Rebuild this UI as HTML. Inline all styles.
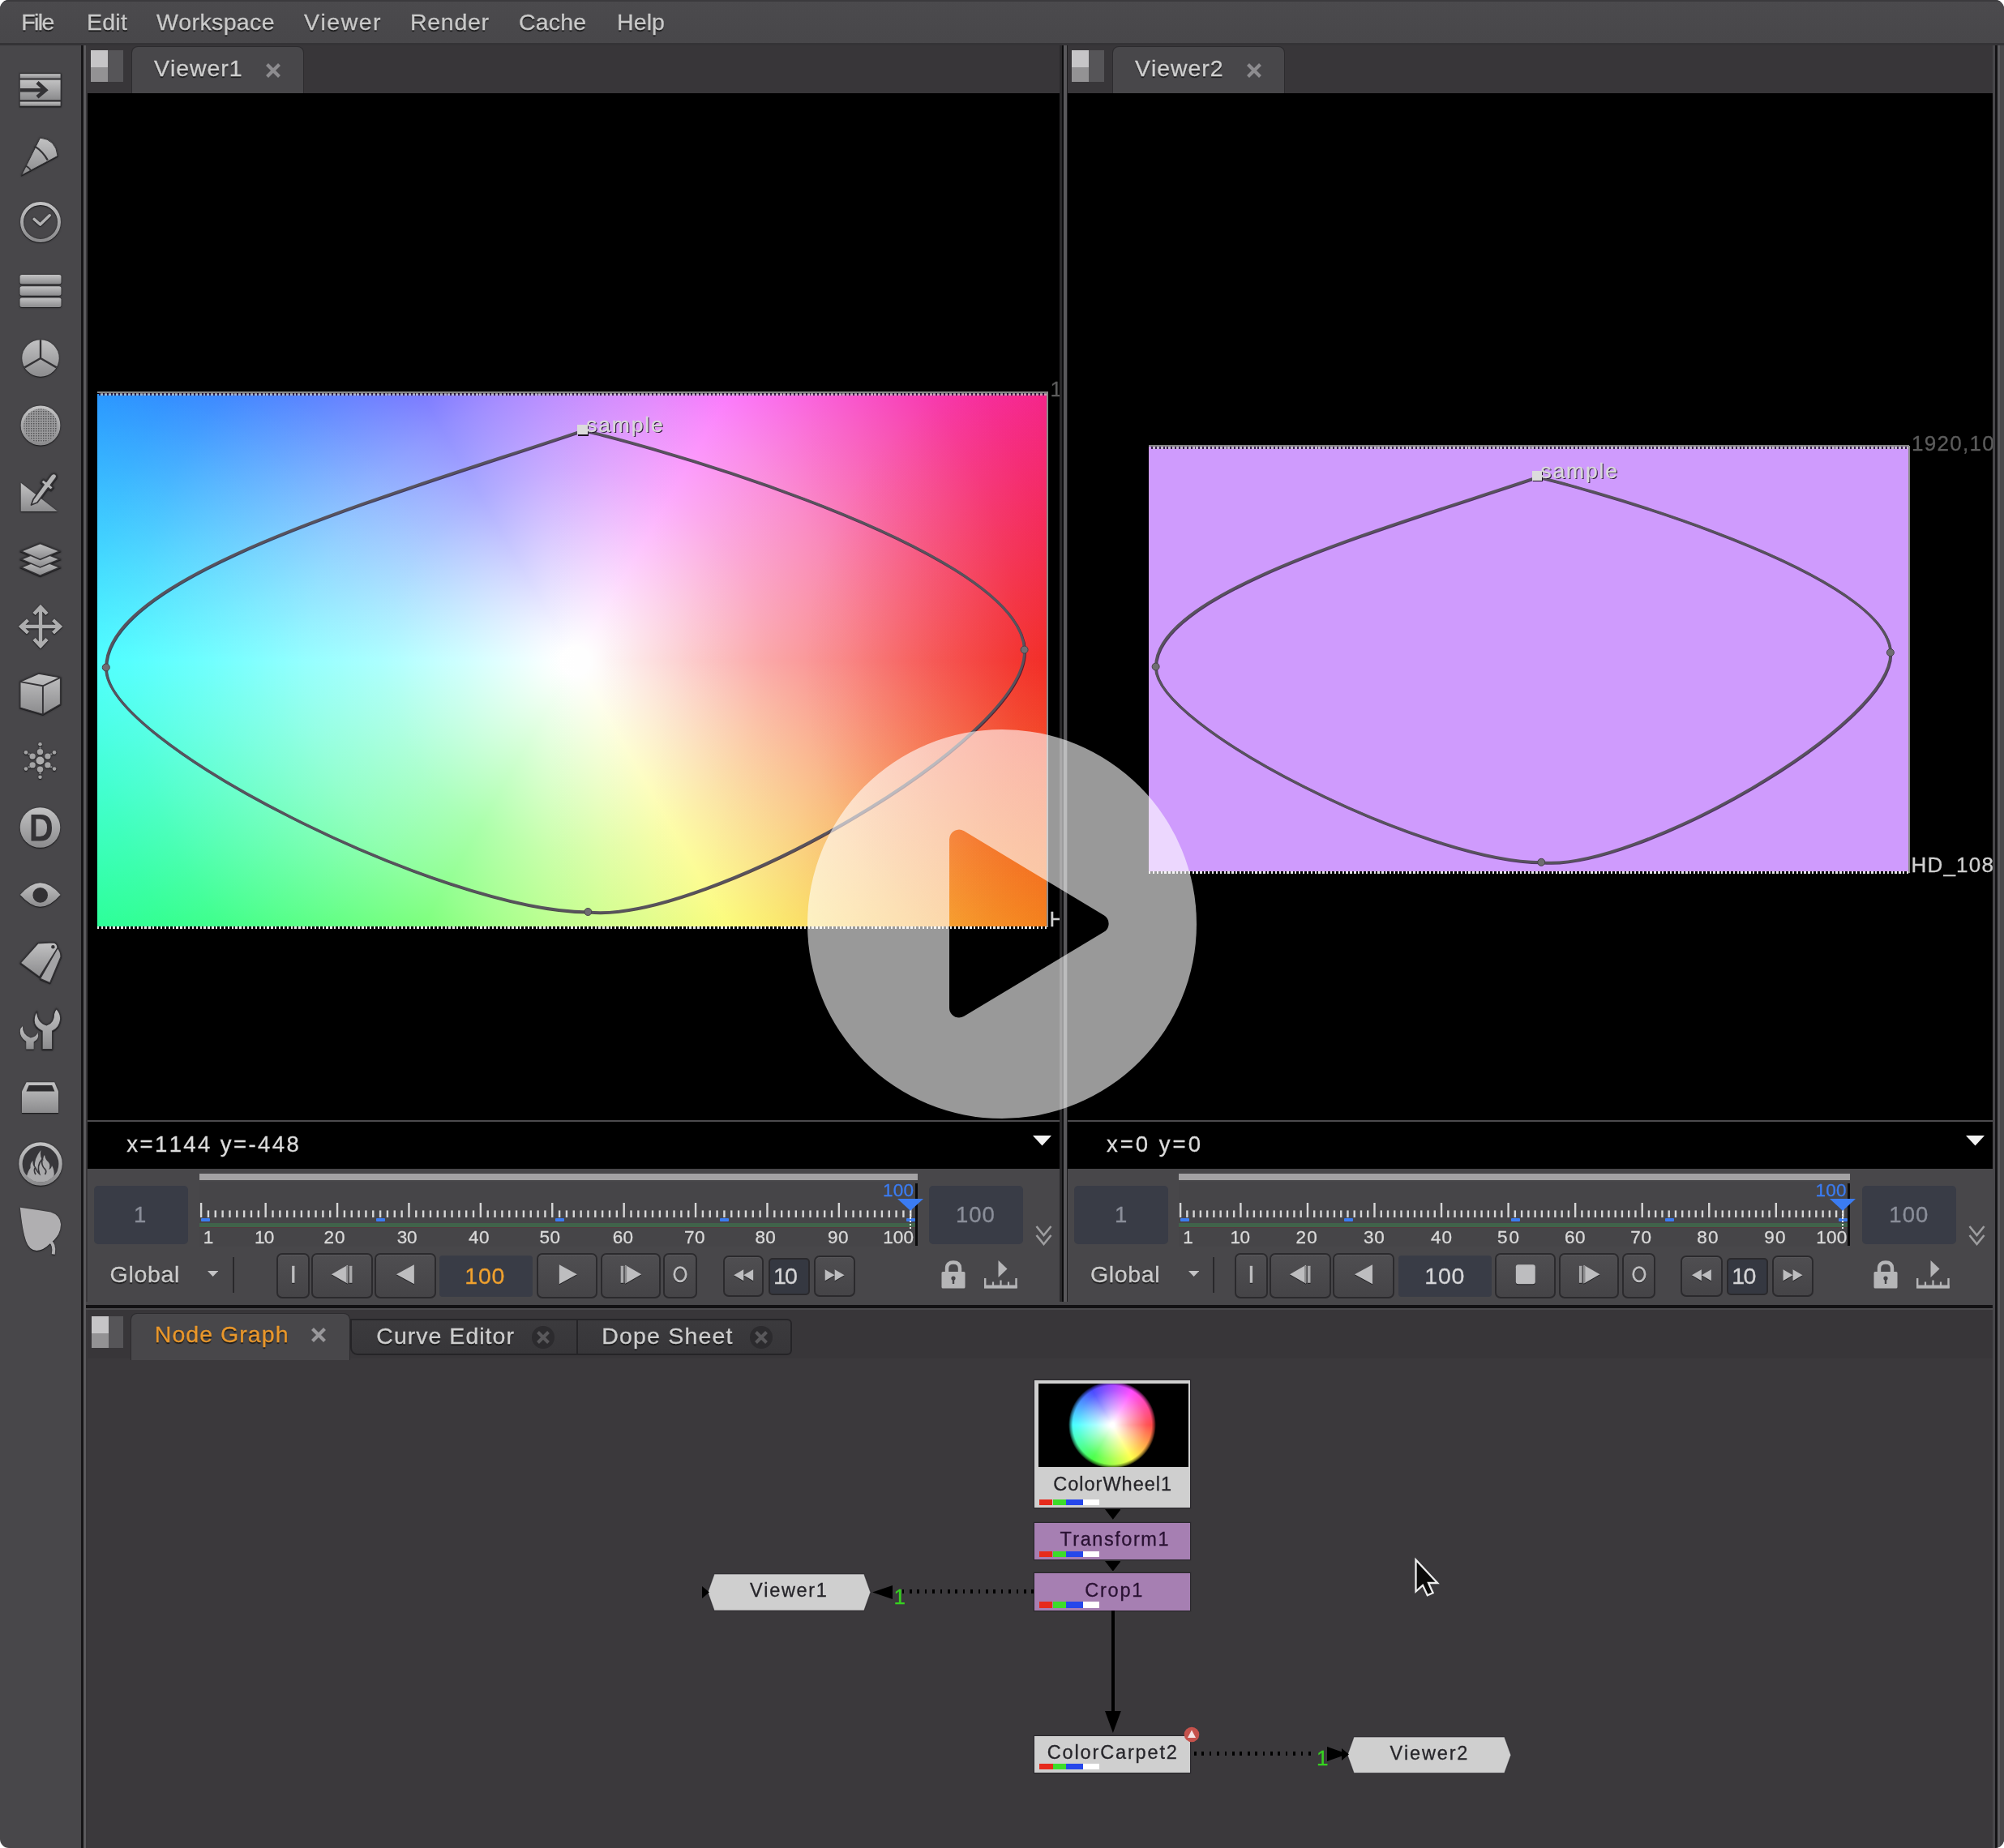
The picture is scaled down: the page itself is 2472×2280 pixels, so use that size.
<!DOCTYPE html>
<html><head><meta charset="utf-8"><title>Nuke</title>
<style>
html,body{margin:0;padding:0;background:#fff;}
body{width:2472px;height:2280px;overflow:hidden;font-family:"Liberation Sans",sans-serif;}
#app{will-change:transform;position:absolute;left:0;top:0;width:2472px;height:2280px;background:#48474a;border-radius:11px;overflow:hidden;}
#app div,#app span,#app svg{position:absolute;}
.t{white-space:nowrap;line-height:1;font-kerning:none;-webkit-text-stroke:.3px currentColor;}
.btn{box-sizing:border-box;border:2px solid #2b2a2d;border-radius:7px;background:linear-gradient(#4f4e51,#454447);box-shadow:inset 0 1px 0 rgba(255,255,255,.06);}
.fld{border-radius:5px;background:#393c46;}
</style></head><body><div id="app">
<svg width="0" height="0" style="left:0;top:0"><defs>
<linearGradient id="ig" x1="0" y1="0" x2="0" y2="1"><stop offset="0" stop-color="#c2c2c3"/><stop offset="1" stop-color="#8b8b8d"/></linearGradient>
<pattern id="dots" width="3" height="3" patternUnits="userSpaceOnUse"><rect width="3" height="3" fill="#9a9a9c"/><rect width="1.5" height="1.5" fill="#555557"/></pattern>
</defs></svg>

<div style="left:0px;top:0px;width:2472px;height:53px;background:linear-gradient(#4b4a4d,#48474a);"></div>
<div style="left:0px;top:0px;width:2472px;height:1.6px;background:#3b3a3d;"></div>
<div style="left:0px;top:53px;width:2472px;height:3px;background:#343336;"></div>
<span class="t " style="left:26.20px;top:12.87px;font-size:28.5px;color:#c9c9c9;letter-spacing:-1.62px;text-shadow:0 1.5px 1px rgba(20,20,20,.85);">File</span>
<span class="t " style="left:106.90px;top:12.87px;font-size:28.5px;color:#c9c9c9;letter-spacing:0.29px;text-shadow:0 1.5px 1px rgba(20,20,20,.85);">Edit</span>
<span class="t " style="left:193.00px;top:12.87px;font-size:28.5px;color:#c9c9c9;letter-spacing:0.38px;text-shadow:0 1.5px 1px rgba(20,20,20,.85);">Workspace</span>
<span class="t " style="left:375.00px;top:12.87px;font-size:28.5px;color:#c9c9c9;letter-spacing:1.48px;text-shadow:0 1.5px 1px rgba(20,20,20,.85);">Viewer</span>
<span class="t " style="left:506.00px;top:12.87px;font-size:28.5px;color:#c9c9c9;letter-spacing:0.70px;text-shadow:0 1.5px 1px rgba(20,20,20,.85);">Render</span>
<span class="t " style="left:640.00px;top:12.87px;font-size:28.5px;color:#c9c9c9;letter-spacing:0.16px;text-shadow:0 1.5px 1px rgba(20,20,20,.85);">Cache</span>
<span class="t " style="left:761.00px;top:12.87px;font-size:28.5px;color:#c9c9c9;letter-spacing:0.12px;text-shadow:0 1.5px 1px rgba(20,20,20,.85);">Help</span>
<div style="left:106px;top:56px;width:2366px;height:59px;background:#383639;"></div>
<div style="left:100px;top:56px;width:3px;height:2224px;background:#161517;"></div>
<div style="left:103px;top:56px;width:3px;height:2224px;background:#5b5a5d;"></div>
<div style="left:106px;top:56px;width:2px;height:2224px;background:#39373a;"></div>
<div style="left:1307px;top:56px;width:3px;height:1554px;background:#2b2a2c;"></div>
<div style="left:1309.5px;top:56px;width:2px;height:1554px;background:#0c0c0d;"></div>
<div style="left:1311.5px;top:56px;width:4.3px;height:1554px;background:#59585b;"></div>
<div style="left:1315.8px;top:56px;width:1.4px;height:1554px;background:#1d1c1e;"></div>
<div style="left:2458px;top:56px;width:3px;height:2224px;background:#48474a;"></div>
<div style="left:2461px;top:56px;width:2.8px;height:2224px;background:#141315;"></div>
<div style="left:2463.8px;top:56px;width:3.4px;height:2224px;background:#5b5a5d;"></div>
<div style="left:2467.2px;top:56px;width:4.8px;height:2224px;background:#49484b;"></div>
<div style="left:106px;top:1606px;width:2352px;height:4px;background:#48474a;"></div>
<div style="left:106px;top:1610px;width:2352px;height:3.5px;background:#121113;"></div>
<div style="left:106px;top:1613.5px;width:2352px;height:2px;background:#4a494c;"></div>
<div style="left:108px;top:1615.5px;width:2350px;height:61px;background:#383639;"></div>
<div style="left:108px;top:1676px;width:2350px;height:604px;background:#3b393c;"></div>
<svg style="left:17.5px;top:78.6px;filter:drop-shadow(0 1.4px 0.7px rgba(25,25,27,.8)) drop-shadow(0 0 0.8px rgba(25,25,27,.7));" width="64" height="64" viewBox="-32 -32 64 64"><rect x="-26" y="-20.6" width="51.4" height="41" fill="#333235"/><rect x="-25.2" y="-19.8" width="49.8" height="5.3" fill="url(#ig)"/><rect x="-25.2" y="-12.4" width="49.8" height="24.6" fill="url(#ig)"/><rect x="-25.2" y="14.6" width="49.8" height="5.1" fill="url(#ig)"/><path d="M-25.2 0.2H3M-4 -9.2L6.2 0.2L-4 8.8" stroke="#333235" stroke-width="4.6" fill="none"/></svg>
<svg style="left:17.5px;top:161px;filter:drop-shadow(0 1.4px 0.7px rgba(25,25,27,.8)) drop-shadow(0 0 0.8px rgba(25,25,27,.7));" width="64" height="64" viewBox="-32 -32 64 64"><path d="M-23.5 23.2 L-0.5 -22.9 Q19 -21 21.1 -0.6 Z" fill="url(#ig)" stroke="#333235" stroke-width="1"/><path d="M-7.2 -12.6 Q3 -6 8.8 4.6" stroke="#333235" stroke-width="2.3" fill="none"/><path d="M-18 11.6 Q-14.5 13.5 -12 17" stroke="#333235" stroke-width="2" fill="none"/></svg>
<svg style="left:17.5px;top:241.8px;filter:drop-shadow(0 1.4px 0.7px rgba(25,25,27,.8)) drop-shadow(0 0 0.8px rgba(25,25,27,.7));" width="64" height="64" viewBox="-32 -32 64 64"><circle r="23" fill="none" stroke="url(#ig)" stroke-width="4"/><path d="M-7.8 -3.5 L-0.4 3 L11.2 -8.2" stroke="#b2b2b3" stroke-width="3.6" fill="none" stroke-linejoin="round" stroke-linecap="round"/></svg>
<svg style="left:17.5px;top:327px;filter:drop-shadow(0 1.4px 0.7px rgba(25,25,27,.8)) drop-shadow(0 0 0.8px rgba(25,25,27,.7));" width="64" height="64" viewBox="-32 -32 64 64"><rect x="-25.5" y="-20" width="51" height="11.5" rx="2.5" fill="url(#ig)"/><rect x="-25.5" y="-5.7" width="51" height="11.5" rx="2.5" fill="url(#ig)"/><rect x="-25.5" y="8.5" width="51" height="11.5" rx="2.5" fill="url(#ig)"/></svg>
<svg style="left:17.5px;top:409.6px;filter:drop-shadow(0 1.4px 0.7px rgba(25,25,27,.8)) drop-shadow(0 0 0.8px rgba(25,25,27,.7));" width="64" height="64" viewBox="-32 -32 64 64"><circle r="22.8" fill="url(#ig)"/><path d="M0 0V-22.8M0 0L-19.7 11.4M0 0L19.7 11.4" stroke="#333235" stroke-width="2.4"/></svg>
<svg style="left:17.5px;top:492.5px;filter:drop-shadow(0 1.4px 0.7px rgba(25,25,27,.8)) drop-shadow(0 0 0.8px rgba(25,25,27,.7));" width="64" height="64" viewBox="-32 -32 64 64"><circle r="22.6" fill="url(#dots)" stroke="url(#ig)" stroke-width="3.6"/></svg>
<svg style="left:17.5px;top:575.7px;filter:drop-shadow(0 1.4px 0.7px rgba(25,25,27,.8)) drop-shadow(0 0 0.8px rgba(25,25,27,.7));" width="64" height="64" viewBox="-32 -32 64 64"><path d="M-24.3 -12.2 L-24.3 22.9 L21.1 22.9 Z" fill="url(#ig)"/><path d="M-11.5 15 L-9 8 L4 -10 L0.5 -13 L3.5 -16.5 L7 -13.8 L13 -22 Q16.5 -25 19 -22.5 Q21 -20 18.5 -17.5 L12.5 -9.5 L15.8 -6.8 L12.8 -3.4 L9.4 -6 L-4 12 Z" fill="#b4b4b5" stroke="#333235" stroke-width="1.8" stroke-linejoin="round"/></svg>
<svg style="left:17.5px;top:658px;filter:drop-shadow(0 1.4px 0.7px rgba(25,25,27,.8)) drop-shadow(0 0 0.8px rgba(25,25,27,.7));" width="64" height="64" viewBox="-32 -32 64 64"><path d="M-24 10 L-0.5 0.5 L23.7 10 L-0.5 20.3 Z" fill="url(#ig)" stroke="#333235" stroke-width="1.6"/><path d="M-24 0 L-0.5 -9.5 L23.7 0 L-0.5 10 Z" fill="url(#ig)" stroke="#333235" stroke-width="1.6"/><path d="M-24 -10 L-0.5 -19.6 L23.7 -10 L-0.5 0.3 Z" fill="url(#ig)" stroke="#333235" stroke-width="1.6"/></svg>
<svg style="left:17.5px;top:740.7px;filter:drop-shadow(0 1.4px 0.7px rgba(25,25,27,.8)) drop-shadow(0 0 0.8px rgba(25,25,27,.7));" width="64" height="64" viewBox="-32 -32 64 64"><path d="M0 -23V23M-23 0H23M-8 -15.5L0 -24L8 -15.5M-8 15.5L0 24L8 15.5M-15.5 -8L-24 0L-15.5 8M15.5 -8L24 0L15.5 8" stroke="#adadae" stroke-width="4.4" fill="none" stroke-linejoin="miter"/></svg>
<svg style="left:17.5px;top:823px;filter:drop-shadow(0 1.4px 0.7px rgba(25,25,27,.8)) drop-shadow(0 0 0.8px rgba(25,25,27,.7));" width="64" height="64" viewBox="-32 -32 64 64"><path d="M-25.2 -13.9 L-2.3 -23.9 L24.6 -19.1 L24.6 13.8 L2.9 26.3 L-25.2 18.1 Z" fill="url(#ig)" stroke="#333235" stroke-width="1.4"/><path d="M-25.2 -13.9 L2.9 -8.7 L24.6 -19.1 M2.9 -8.7 V26.3" stroke="#333235" stroke-width="1.9" fill="none"/></svg>
<svg style="left:17.5px;top:907px;filter:drop-shadow(0 1.4px 0.7px rgba(25,25,27,.8)) drop-shadow(0 0 0.8px rgba(25,25,27,.7));" width="64" height="64" viewBox="-32 -32 64 64"><circle cx="-0.5" cy="-0.5" r="5" fill="#adadae"/><circle cx="-0.5" cy="-11.3" r="3.7" fill="#a4a4a5"/><circle cx="-0.5" cy="-20.7" r="2.3" fill="#a4a4a5"/><circle cx="-0.5" cy="-16.3" r="1.3" fill="#7e7e80"/><circle cx="8.9" cy="-5.9" r="3.7" fill="#a4a4a5"/><circle cx="17.0" cy="-10.6" r="2.3" fill="#a4a4a5"/><circle cx="13.2" cy="-8.4" r="1.3" fill="#7e7e80"/><circle cx="8.9" cy="4.9" r="3.7" fill="#a4a4a5"/><circle cx="17.0" cy="9.6" r="2.3" fill="#a4a4a5"/><circle cx="13.2" cy="7.4" r="1.3" fill="#7e7e80"/><circle cx="-0.5" cy="10.3" r="3.7" fill="#a4a4a5"/><circle cx="-0.5" cy="19.7" r="2.3" fill="#a4a4a5"/><circle cx="-0.5" cy="15.3" r="1.3" fill="#7e7e80"/><circle cx="-9.9" cy="4.9" r="3.7" fill="#a4a4a5"/><circle cx="-18.0" cy="9.6" r="2.3" fill="#a4a4a5"/><circle cx="-14.2" cy="7.4" r="1.3" fill="#7e7e80"/><circle cx="-9.9" cy="-5.9" r="3.7" fill="#a4a4a5"/><circle cx="-18.0" cy="-10.6" r="2.3" fill="#a4a4a5"/><circle cx="-14.2" cy="-8.4" r="1.3" fill="#7e7e80"/></svg>
<svg style="left:17.5px;top:989.2px;filter:drop-shadow(0 1.4px 0.7px rgba(25,25,27,.8)) drop-shadow(0 0 0.8px rgba(25,25,27,.7));" width="64" height="64" viewBox="-32 -32 64 64"><circle cx="-0.5" r="24.8" fill="url(#ig)"/><path d="M-11.5 -16 H0 Q14 -16 14 0.2 Q14 16.4 0 16.4 H-11.5 Z M-5.6 -10.6 V11 H-0.8 Q8 11 8 0.2 Q8 -10.6 -0.8 -10.6 Z" fill="#333235" fill-rule="evenodd"/></svg>
<svg style="left:17.5px;top:1071.7px;filter:drop-shadow(0 1.4px 0.7px rgba(25,25,27,.8)) drop-shadow(0 0 0.8px rgba(25,25,27,.7));" width="64" height="64" viewBox="-32 -32 64 64"><path d="M-25.2 0 Q-12 -14.8 -0.5 -14.8 Q12 -14.8 24.6 0 Q12 14.8 -0.5 14.8 Q-12 14.8 -25.2 0 Z" fill="url(#ig)"/><circle cx="-0.3" cy="0.4" r="9.3" fill="#323134"/></svg>
<svg style="left:17.5px;top:1154.5px;filter:drop-shadow(0 1.4px 0.7px rgba(25,25,27,.8)) drop-shadow(0 0 0.8px rgba(25,25,27,.7));" width="64" height="64" viewBox="-32 -32 64 64"><path d="M21.1 -17.6 Q25.5 -12 25 -6.3 L11.6 25.7 L-0.5 20.5 Z" fill="#a3a3a5" stroke="#333235" stroke-width="1.4" stroke-linejoin="round"/><path d="M-24.8 1 L-3.1 -23.2 L15 -24.3 Q21 -24 21.1 -17.6 L-1.4 18.3 Z" fill="url(#ig)" stroke="#333235" stroke-width="1.4" stroke-linejoin="round"/><circle cx="15.4" cy="-18.8" r="2.2" fill="#333235"/></svg>
<svg style="left:17.5px;top:1238px;filter:drop-shadow(0 1.4px 0.7px rgba(25,25,27,.8)) drop-shadow(0 0 0.8px rgba(25,25,27,.7));" width="64" height="64" viewBox="-32 -32 64 64"><path d="M-17.8 24.5 V15 Q-25.5 10 -25.2 2 Q-24.8 -2 -22 -4 Q-22.5 7 -12.2 10.5 Q-5 9 -3.5 4 Q-1 12 -8.3 15.5 V24.5 Z" fill="url(#ig)"/><path d="M2.1 24.5 V2 Q-8.5 -3 -7.9 -12 Q-7.5 -18.5 -4.5 -22 Q-3.5 -8 7.7 -5.2 Q16.5 -8 16.5 -19 Q17.5 -23 19.6 -25.5 Q25.5 -19 24.6 -12 Q23.5 -2 14.6 2 V24.5 Z" fill="url(#ig)" stroke="#333235" stroke-width="1.2"/></svg>
<svg style="left:17.5px;top:1322px;filter:drop-shadow(0 1.4px 0.7px rgba(25,25,27,.8)) drop-shadow(0 0 0.8px rgba(25,25,27,.7));" width="64" height="64" viewBox="-32 -32 64 64"><path d="M-23 18.9 V-7.5 L-17.4 -18.8 H17.2 L22 -7.5 V18.9 Z" fill="url(#ig)"/><path d="M-17.6 -7.5 L-14.4 -14.9 H14.2 L17.4 -7.5 Z" fill="#2d2c2f"/></svg>
<svg style="left:17.5px;top:1403.7px;filter:drop-shadow(0 1.4px 0.7px rgba(25,25,27,.8)) drop-shadow(0 0 0.8px rgba(25,25,27,.7));" width="64" height="64" viewBox="-32 -32 64 64"><circle r="24.6" fill="#37363a" stroke="url(#ig)" stroke-width="4.4"/><path d="M-17 15 Q-15 8 -12.5 5 Q-13 -1 -9.5 -4 Q-10 2 -7 4.5 Q-8.5 -6 0.4 -17 Q-1.5 -8 3.5 -4 Q2.5 -8 5 -11 Q6 -5 9.5 -2.5 Q13 2 10 7 Q13.5 6 14 2 Q17.5 8 16.5 15 Q10 22.5 0 22.5 Q-10 22.5 -17 15 Z" fill="#a9a9ab"/><path d="M-6 13 Q-9 8 -6.5 4.5 Q-4 10 -1.5 12 Q-5 2 2 -6 Q0.5 2 5.5 6.5 Q8 9 5.5 13" stroke="#37363a" stroke-width="1.7" fill="none"/></svg>
<svg style="left:17.5px;top:1486px;filter:drop-shadow(0 1.4px 0.7px rgba(25,25,27,.8)) drop-shadow(0 0 0.8px rgba(25,25,27,.7));" width="64" height="64" viewBox="-32 -32 64 64"><path d="M-25.2 -28.2 Q-6 -25.5 12.5 -22.6 Q24 -19 25 -8 Q25.5 6 12 16 Q4 24.5 -4.8 25 Q-14 24.5 -18 13 Q-22.5 0 -25.2 -28.2 Z" fill="#b0afb1"/><path d="M10.5 12.5 Q18 17 15.8 29.5" stroke="#b0afb1" stroke-width="4" fill="none"/></svg>
<div style="left:112px;top:62px;width:21px;height:21px;background:#c6c5c7;"></div><div style="left:112px;top:83px;width:21px;height:18px;background:#939294;"></div><div style="left:133px;top:62px;width:18.5px;height:39px;background:#565558;"></div>
<div style="left:161.6px;top:57.2px;width:211px;height:58px;background:#48474a;border-radius:8px 8px 0 0;border:1.5px solid #2c2b2e;border-bottom:none;"></div>
<span class="t " style="left:190.00px;top:69.87px;font-size:28.5px;color:#cfcfcf;letter-spacing:0.92px;text-shadow:0 1.5px 1px rgba(20,20,20,.85);">Viewer1</span>
<svg style="left:325px;top:74.5px" width="24" height="24" viewBox="-12 -12 24 24"><path d="M-7.5 -7.5L7.5 7.5M-7.5 7.5L7.5 -7.5" stroke="#8d8c8f" stroke-width="4.2" stroke-linecap="butt" fill="none"/></svg>
<div style="left:1322px;top:62px;width:21px;height:21px;background:#c6c5c7;"></div><div style="left:1322px;top:83px;width:21px;height:18px;background:#939294;"></div><div style="left:1343px;top:62px;width:18.5px;height:39px;background:#565558;"></div>
<div style="left:1371.6px;top:57.2px;width:211px;height:58px;background:#48474a;border-radius:8px 8px 0 0;border:1.5px solid #2c2b2e;border-bottom:none;"></div>
<span class="t " style="left:1400.00px;top:69.87px;font-size:28.5px;color:#cfcfcf;letter-spacing:0.92px;text-shadow:0 1.5px 1px rgba(20,20,20,.85);">Viewer2</span>
<svg style="left:1535px;top:74.5px" width="24" height="24" viewBox="-12 -12 24 24"><path d="M-7.5 -7.5L7.5 7.5M-7.5 7.5L7.5 -7.5" stroke="#8d8c8f" stroke-width="4.2" stroke-linecap="butt" fill="none"/></svg>
<div style="left:108px;top:115px;width:1199px;height:1267px;background:#000;overflow:hidden">
<div style="left:12px;top:370.5px;width:1171px;height:657px;background:linear-gradient(90deg,rgba(0,0,0,0) 45%,rgba(0,0,0,.04) 100%),radial-gradient(ellipse 300px 380px at 100% 52%,rgba(240,30,0,.2),rgba(240,30,0,0)),radial-gradient(ellipse 300px 260px at 100% 100%,rgba(250,110,0,.2),rgba(250,110,0,0)),radial-gradient(ellipse 470px 400px at 0% 52%,rgba(255,255,255,.15),rgba(255,255,255,0)),radial-gradient(circle 800px at 590px 329.5px,#fff 0,#fff 18px,rgba(255,255,255,.86) 110px,rgba(255,255,255,.67) 235px,rgba(255,255,255,.56) 330px,rgba(255,255,255,.38) 450px,rgba(255,255,255,.24) 547px,rgba(255,255,255,.19) 600px,rgba(255,255,255,.14) 690px,rgba(255,255,255,0) 800px),conic-gradient(from 90deg at 590px 329.5px,#f00,#ff0,#0f0,#0ff,#00f,#f0f,#f00);"></div>
<div style="left:12px;top:367.7px;width:1172.5px;height:2.4px;background:#868686;"></div><div style="left:14.4px;top:370.1px;width:1170.1px;height:2.8px;background:repeating-linear-gradient(90deg,rgba(35,15,55,.85) 0,rgba(35,15,55,.85) 1.9px,rgba(196,196,196,.72) 1.9px,rgba(196,196,196,.72) 4.87px);"></div>
<div style="left:12px;top:1028px;width:1172.5px;height:3px;background:repeating-linear-gradient(90deg,#e4e4e4 0,#e4e4e4 2.3px,#000 2.3px,#000 4.87px);"></div>
<div style="left:1182.5px;top:369px;width:2px;height:660px;background:#8a8a8a;"></div>
<svg style="left:12px;top:369px;overflow:visible" width="1171" height="659"><g transform="scale(1.0) translate(-120 -484)" fill="none"><path d="M718.8 531.1 C724.1 529.6 1258.6 667.1 1263.6 801.6 C1267.9 913.7 867.4 1139.7 725.3 1125.0 C544.4 1124.3 125.8 913.8 130.8 823.4 C130.2 708.5 479.1 612.0 718.8 531.1 Z" stroke="rgba(35,18,45,.75)" stroke-width="3.10" transform="translate(0.80 0.90)"/><path d="M718.8 531.1 C724.1 529.6 1258.6 667.1 1263.6 801.6 C1267.9 913.7 867.4 1139.7 725.3 1125.0 C544.4 1124.3 125.8 913.8 130.8 823.4 C130.2 708.5 479.1 612.0 718.8 531.1 Z" stroke="#58535d" stroke-width="3.10"/><circle cx="1263.6" cy="801.6" r="4.50" fill="#6f6d72" stroke="#46434a" stroke-width="1.00"/><circle cx="725.3" cy="1125" r="4.50" fill="#6f6d72" stroke="#46434a" stroke-width="1.00"/><circle cx="130.8" cy="823.4" r="4.50" fill="#6f6d72" stroke="#46434a" stroke-width="1.00"/></g></svg>
<div style="left:605.4px;top:410.2px;width:12.4px;height:12.4px;background:#1f1424;"></div><div style="left:604.4px;top:409.0px;width:12.4px;height:12.4px;background:#dcdcdc;"></div><span class="t " style="left:615.20px;top:396.17px;font-size:26.5px;color:#d9d9d9;letter-spacing:1.82px;text-shadow:1.3px 1.3px 0 rgba(25,10,35,.9);">sample</span>
<span class="t " style="left:1295.50px;top:466.99px;font-size:26px;color:#5c5c5c;margin-left:-108px;margin-top:-115px;letter-spacing:1.3px;">1920,1080</span>
<span class="t " style="left:1294.40px;top:1120.99px;font-size:26px;color:#cfcfcf;margin-left:-108px;margin-top:-115px;letter-spacing:1.2px;">HD_1080</span>
</div>
<div style="left:1317px;top:115px;width:1141px;height:1267px;background:#000;overflow:hidden">
<div style="left:100.29999999999995px;top:436px;width:936.5px;height:524px;background:#cf9bfd;"></div>
<div style="left:100.29999999999995px;top:434.0px;width:938px;height:2.4px;background:#868686;"></div><div style="left:102.69999999999996px;top:436.40000000000003px;width:935.6px;height:2.8px;background:repeating-linear-gradient(90deg,rgba(35,15,55,.85) 0,rgba(35,15,55,.85) 1.9px,rgba(196,196,196,.72) 1.9px,rgba(196,196,196,.72) 4.87px);"></div>
<div style="left:100.29999999999995px;top:960px;width:938px;height:3px;background:repeating-linear-gradient(90deg,#e4e4e4 0,#e4e4e4 2.3px,#000 2.3px,#000 4.87px);"></div>
<div style="left:1036.6px;top:435px;width:2px;height:527px;background:#8a8a8a;"></div>
<svg style="left:100.29999999999995px;top:436px;overflow:visible" width="936" height="526"><g transform="scale(0.8) translate(-120 -484)" fill="none"><path d="M718.8 531.1 C724.1 529.6 1258.6 667.1 1263.6 801.6 C1267.9 913.7 867.4 1139.7 725.3 1125.0 C544.4 1124.3 125.8 913.8 130.8 823.4 C130.2 708.5 479.1 612.0 718.8 531.1 Z" stroke="rgba(35,18,45,.75)" stroke-width="3.88" transform="translate(1.00 1.12)"/><path d="M718.8 531.1 C724.1 529.6 1258.6 667.1 1263.6 801.6 C1267.9 913.7 867.4 1139.7 725.3 1125.0 C544.4 1124.3 125.8 913.8 130.8 823.4 C130.2 708.5 479.1 612.0 718.8 531.1 Z" stroke="#58535d" stroke-width="3.88"/><circle cx="1263.6" cy="801.6" r="5.62" fill="#6f6d72" stroke="#46434a" stroke-width="1.25"/><circle cx="725.3" cy="1125" r="5.62" fill="#6f6d72" stroke="#46434a" stroke-width="1.25"/><circle cx="130.8" cy="823.4" r="5.62" fill="#6f6d72" stroke="#46434a" stroke-width="1.25"/></g></svg>
<div style="left:573.5999999999999px;top:467.00000000000006px;width:12.4px;height:12.4px;background:#1f1424;"></div><div style="left:572.5999999999999px;top:465.80000000000007px;width:12.4px;height:12.4px;background:#dcdcdc;"></div><span class="t " style="left:583.40px;top:452.97px;font-size:26.5px;color:#d9d9d9;letter-spacing:1.82px;text-shadow:1.3px 1.3px 0 rgba(25,10,35,.9);">sample</span>
<span class="t " style="left:2358.00px;top:533.79px;font-size:26px;color:#5c5c5c;margin-left:-1317px;margin-top:-115px;letter-spacing:1.3px;">1920,1080</span>
<span class="t " style="left:2357.50px;top:1053.99px;font-size:26px;color:#cfcfcf;margin-left:-1317px;margin-top:-115px;letter-spacing:1.2px;">HD_1080</span>
</div>
<div style="left:108px;top:1382px;width:1199px;height:2.4px;background:#4c4b4e;"></div>
<div style="left:108px;top:1384.4px;width:1199px;height:58px;background:#000;"></div>
<span class="t " style="left:156.30px;top:1397.72px;font-size:27.5px;color:#dcdcdc;letter-spacing:2.41px;">x=1144 y=-448</span>
<svg style="left:1274px;top:1401px" width="23" height="12.5"><polygon points="0,0 23,0 11.5,12.5" fill="#f2f2f2"/></svg>
<div style="left:1317px;top:1382px;width:1141px;height:2.4px;background:#4c4b4e;"></div>
<div style="left:1317px;top:1384.4px;width:1141px;height:58px;background:#000;"></div>
<span class="t " style="left:1365.00px;top:1397.72px;font-size:27.5px;color:#dcdcdc;letter-spacing:3.02px;">x=0 y=0</span>
<svg style="left:2424.5px;top:1401px" width="23" height="12.5"><polygon points="0,0 23,0 11.5,12.5" fill="#f2f2f2"/></svg>
<div style="left:108px;top:1442.4px;width:1199px;height:164px;background:#48474a;"></div>
<div class="fld" style="left:115.5px;top:1462.8px;width:116px;height:72.7px"></div>
<span class="t " style="left:165.00px;top:1485.32px;font-size:27.5px;color:#8a8e99;">1</span>
<div class="fld" style="left:1145.5px;top:1462.8px;width:116px;height:72.7px"></div>
<span class="t " style="left:1178.90px;top:1485.32px;font-size:27.5px;color:#8a8e99;letter-spacing:1.06px;">100</span>
<div style="left:245.9px;top:1448px;width:885.66px;height:8px;background:#a3a2a4;"></div>
<div style="left:245.9px;top:1458px;width:884.16px;height:79.5px;background:#464548;"></div>
<svg style="left:245.9px;top:1484.4px" width="881.2" height="18" fill="#d6d6d6"><rect x="0.90" y="0" width="2.4" height="18"/><rect x="9.74" y="9.4" width="2.4" height="8.6"/><rect x="18.58" y="9.4" width="2.4" height="8.6"/><rect x="27.42" y="9.4" width="2.4" height="8.6"/><rect x="36.26" y="9.4" width="2.4" height="8.6"/><rect x="45.10" y="9.4" width="2.4" height="8.6"/><rect x="53.94" y="9.4" width="2.4" height="8.6"/><rect x="62.78" y="9.4" width="2.4" height="8.6"/><rect x="71.62" y="9.4" width="2.4" height="8.6"/><rect x="80.46" y="0" width="2.4" height="18"/><rect x="89.30" y="9.4" width="2.4" height="8.6"/><rect x="98.14" y="9.4" width="2.4" height="8.6"/><rect x="106.98" y="9.4" width="2.4" height="8.6"/><rect x="115.82" y="9.4" width="2.4" height="8.6"/><rect x="124.66" y="9.4" width="2.4" height="8.6"/><rect x="133.50" y="9.4" width="2.4" height="8.6"/><rect x="142.34" y="9.4" width="2.4" height="8.6"/><rect x="151.18" y="9.4" width="2.4" height="8.6"/><rect x="160.02" y="9.4" width="2.4" height="8.6"/><rect x="168.86" y="0" width="2.4" height="18"/><rect x="177.70" y="9.4" width="2.4" height="8.6"/><rect x="186.54" y="9.4" width="2.4" height="8.6"/><rect x="195.38" y="9.4" width="2.4" height="8.6"/><rect x="204.22" y="9.4" width="2.4" height="8.6"/><rect x="213.06" y="9.4" width="2.4" height="8.6"/><rect x="221.90" y="9.4" width="2.4" height="8.6"/><rect x="230.74" y="9.4" width="2.4" height="8.6"/><rect x="239.58" y="9.4" width="2.4" height="8.6"/><rect x="248.42" y="9.4" width="2.4" height="8.6"/><rect x="257.26" y="0" width="2.4" height="18"/><rect x="266.10" y="9.4" width="2.4" height="8.6"/><rect x="274.94" y="9.4" width="2.4" height="8.6"/><rect x="283.78" y="9.4" width="2.4" height="8.6"/><rect x="292.62" y="9.4" width="2.4" height="8.6"/><rect x="301.46" y="9.4" width="2.4" height="8.6"/><rect x="310.30" y="9.4" width="2.4" height="8.6"/><rect x="319.14" y="9.4" width="2.4" height="8.6"/><rect x="327.98" y="9.4" width="2.4" height="8.6"/><rect x="336.82" y="9.4" width="2.4" height="8.6"/><rect x="345.66" y="0" width="2.4" height="18"/><rect x="354.50" y="9.4" width="2.4" height="8.6"/><rect x="363.34" y="9.4" width="2.4" height="8.6"/><rect x="372.18" y="9.4" width="2.4" height="8.6"/><rect x="381.02" y="9.4" width="2.4" height="8.6"/><rect x="389.86" y="9.4" width="2.4" height="8.6"/><rect x="398.70" y="9.4" width="2.4" height="8.6"/><rect x="407.54" y="9.4" width="2.4" height="8.6"/><rect x="416.38" y="9.4" width="2.4" height="8.6"/><rect x="425.22" y="9.4" width="2.4" height="8.6"/><rect x="434.06" y="0" width="2.4" height="18"/><rect x="442.90" y="9.4" width="2.4" height="8.6"/><rect x="451.74" y="9.4" width="2.4" height="8.6"/><rect x="460.58" y="9.4" width="2.4" height="8.6"/><rect x="469.42" y="9.4" width="2.4" height="8.6"/><rect x="478.26" y="9.4" width="2.4" height="8.6"/><rect x="487.10" y="9.4" width="2.4" height="8.6"/><rect x="495.94" y="9.4" width="2.4" height="8.6"/><rect x="504.78" y="9.4" width="2.4" height="8.6"/><rect x="513.62" y="9.4" width="2.4" height="8.6"/><rect x="522.46" y="0" width="2.4" height="18"/><rect x="531.30" y="9.4" width="2.4" height="8.6"/><rect x="540.14" y="9.4" width="2.4" height="8.6"/><rect x="548.98" y="9.4" width="2.4" height="8.6"/><rect x="557.82" y="9.4" width="2.4" height="8.6"/><rect x="566.66" y="9.4" width="2.4" height="8.6"/><rect x="575.50" y="9.4" width="2.4" height="8.6"/><rect x="584.34" y="9.4" width="2.4" height="8.6"/><rect x="593.18" y="9.4" width="2.4" height="8.6"/><rect x="602.02" y="9.4" width="2.4" height="8.6"/><rect x="610.86" y="0" width="2.4" height="18"/><rect x="619.70" y="9.4" width="2.4" height="8.6"/><rect x="628.54" y="9.4" width="2.4" height="8.6"/><rect x="637.38" y="9.4" width="2.4" height="8.6"/><rect x="646.22" y="9.4" width="2.4" height="8.6"/><rect x="655.06" y="9.4" width="2.4" height="8.6"/><rect x="663.90" y="9.4" width="2.4" height="8.6"/><rect x="672.74" y="9.4" width="2.4" height="8.6"/><rect x="681.58" y="9.4" width="2.4" height="8.6"/><rect x="690.42" y="9.4" width="2.4" height="8.6"/><rect x="699.26" y="0" width="2.4" height="18"/><rect x="708.10" y="9.4" width="2.4" height="8.6"/><rect x="716.94" y="9.4" width="2.4" height="8.6"/><rect x="725.78" y="9.4" width="2.4" height="8.6"/><rect x="734.62" y="9.4" width="2.4" height="8.6"/><rect x="743.46" y="9.4" width="2.4" height="8.6"/><rect x="752.30" y="9.4" width="2.4" height="8.6"/><rect x="761.14" y="9.4" width="2.4" height="8.6"/><rect x="769.98" y="9.4" width="2.4" height="8.6"/><rect x="778.82" y="9.4" width="2.4" height="8.6"/><rect x="787.66" y="0" width="2.4" height="18"/><rect x="796.50" y="9.4" width="2.4" height="8.6"/><rect x="805.34" y="9.4" width="2.4" height="8.6"/><rect x="814.18" y="9.4" width="2.4" height="8.6"/><rect x="823.02" y="9.4" width="2.4" height="8.6"/><rect x="831.86" y="9.4" width="2.4" height="8.6"/><rect x="840.70" y="9.4" width="2.4" height="8.6"/><rect x="849.54" y="9.4" width="2.4" height="8.6"/><rect x="858.38" y="9.4" width="2.4" height="8.6"/><rect x="867.22" y="9.4" width="2.4" height="8.6"/><rect x="876.06" y="0" width="2.4" height="18"/></svg>
<div style="left:245.9px;top:1509.3px;width:884.16px;height:5px;background:#40634a;"></div>
<div style="left:245.9px;top:1514.3px;width:884.16px;height:1.2px;background:#54393f;"></div>
<div style="left:247.9px;top:1503px;width:11px;height:4.2px;background:#3b7cf2;border-radius:1px"></div>
<div style="left:463.9px;top:1503px;width:11px;height:4.2px;background:#3b7cf2;border-radius:1px"></div>
<div style="left:684.9px;top:1503px;width:11px;height:4.2px;background:#3b7cf2;border-radius:1px"></div>
<div style="left:888.2199999999999px;top:1503px;width:11px;height:4.2px;background:#3b7cf2;border-radius:1px"></div>
<div style="left:1118.06px;top:1503px;width:11px;height:4.2px;background:#3b7cf2;border-radius:1px"></div>
<span class="t " style="left:250.70px;top:1516.45px;font-size:22.5px;color:#d9d9d9;">1</span>
<span class="t " style="left:314.00px;top:1516.45px;font-size:22.5px;color:#d9d9d9;letter-spacing:-0.80px;">10</span>
<span class="t " style="left:399.50px;top:1516.45px;font-size:22.5px;color:#d9d9d9;letter-spacing:1.00px;">20</span>
<span class="t " style="left:489.80px;top:1516.45px;font-size:22.5px;color:#d9d9d9;letter-spacing:-0.20px;">30</span>
<span class="t " style="left:578.00px;top:1516.45px;font-size:22.5px;color:#d9d9d9;letter-spacing:0.40px;">40</span>
<span class="t " style="left:665.50px;top:1516.45px;font-size:22.5px;color:#d9d9d9;letter-spacing:0.40px;">50</span>
<span class="t " style="left:755.70px;top:1516.45px;font-size:22.5px;color:#d9d9d9;letter-spacing:0.30px;">60</span>
<span class="t " style="left:843.90px;top:1516.45px;font-size:22.5px;color:#d9d9d9;letter-spacing:0.60px;">70</span>
<span class="t " style="left:931.40px;top:1516.45px;font-size:22.5px;color:#d9d9d9;letter-spacing:0.40px;">80</span>
<span class="t " style="left:1021.00px;top:1516.45px;font-size:22.5px;color:#d9d9d9;letter-spacing:0.50px;">90</span>
<span class="t " style="left:1089.20px;top:1516.45px;font-size:22.5px;color:#d9d9d9;letter-spacing:0.15px;">100</span>
<div style="left:1129.06px;top:1460px;width:3px;height:77px;background:#0b0b0c;"></div>
<span class="t " style="left:1089.06px;top:1457.65px;font-size:22.5px;color:#3b7cf2;letter-spacing:0.25px;">100</span>
<svg style="left:1107.06px;top:1479px" width="32" height="14.8"><polygon points="0,0 32,0 16.0,14.8" fill="#3b7cf2"/></svg>
<div style="left:1122.06px;top:1494px;width:2px;height:22px;background:repeating-linear-gradient(180deg,#e8e8e8 0,#e8e8e8 2px,transparent 2px,transparent 4px);"></div>
<svg style="left:1277px;top:1510px" width="22" height="30" viewBox="0 0 22 30"><path d="M1.5 3 L10.5 14 L19.5 3 M1.5 14 L10.5 25 L19.5 14" stroke="#9e9ea0" stroke-width="2.6" fill="none"/></svg>
<div style="left:1317px;top:1442.4px;width:1141px;height:164px;background:#48474a;"></div>
<div class="fld" style="left:1325.4px;top:1462.8px;width:116px;height:72.7px"></div>
<span class="t " style="left:1374.90px;top:1485.32px;font-size:27.5px;color:#8a8e99;">1</span>
<div class="fld" style="left:2296.9px;top:1462.8px;width:116px;height:72.7px"></div>
<span class="t " style="left:2330.30px;top:1485.32px;font-size:27.5px;color:#8a8e99;letter-spacing:1.06px;">100</span>
<div style="left:1454.2px;top:1448px;width:827.7450000000001px;height:8px;background:#a3a2a4;"></div>
<div style="left:1454.2px;top:1458px;width:826.2450000000001px;height:79.5px;background:#464548;"></div>
<svg style="left:1454.2px;top:1484.4px" width="823.2" height="18" fill="#d6d6d6"><rect x="0.90" y="0" width="2.4" height="18"/><rect x="9.16" y="9.4" width="2.4" height="8.6"/><rect x="17.41" y="9.4" width="2.4" height="8.6"/><rect x="25.67" y="9.4" width="2.4" height="8.6"/><rect x="33.92" y="9.4" width="2.4" height="8.6"/><rect x="42.18" y="9.4" width="2.4" height="8.6"/><rect x="50.43" y="9.4" width="2.4" height="8.6"/><rect x="58.69" y="9.4" width="2.4" height="8.6"/><rect x="66.94" y="9.4" width="2.4" height="8.6"/><rect x="75.20" y="0" width="2.4" height="18"/><rect x="83.45" y="9.4" width="2.4" height="8.6"/><rect x="91.71" y="9.4" width="2.4" height="8.6"/><rect x="99.96" y="9.4" width="2.4" height="8.6"/><rect x="108.22" y="9.4" width="2.4" height="8.6"/><rect x="116.47" y="9.4" width="2.4" height="8.6"/><rect x="124.73" y="9.4" width="2.4" height="8.6"/><rect x="132.98" y="9.4" width="2.4" height="8.6"/><rect x="141.24" y="9.4" width="2.4" height="8.6"/><rect x="149.49" y="9.4" width="2.4" height="8.6"/><rect x="157.75" y="0" width="2.4" height="18"/><rect x="166.00" y="9.4" width="2.4" height="8.6"/><rect x="174.26" y="9.4" width="2.4" height="8.6"/><rect x="182.51" y="9.4" width="2.4" height="8.6"/><rect x="190.77" y="9.4" width="2.4" height="8.6"/><rect x="199.02" y="9.4" width="2.4" height="8.6"/><rect x="207.28" y="9.4" width="2.4" height="8.6"/><rect x="215.53" y="9.4" width="2.4" height="8.6"/><rect x="223.78" y="9.4" width="2.4" height="8.6"/><rect x="232.04" y="9.4" width="2.4" height="8.6"/><rect x="240.29" y="0" width="2.4" height="18"/><rect x="248.55" y="9.4" width="2.4" height="8.6"/><rect x="256.80" y="9.4" width="2.4" height="8.6"/><rect x="265.06" y="9.4" width="2.4" height="8.6"/><rect x="273.31" y="9.4" width="2.4" height="8.6"/><rect x="281.57" y="9.4" width="2.4" height="8.6"/><rect x="289.82" y="9.4" width="2.4" height="8.6"/><rect x="298.08" y="9.4" width="2.4" height="8.6"/><rect x="306.33" y="9.4" width="2.4" height="8.6"/><rect x="314.59" y="9.4" width="2.4" height="8.6"/><rect x="322.84" y="0" width="2.4" height="18"/><rect x="331.10" y="9.4" width="2.4" height="8.6"/><rect x="339.36" y="9.4" width="2.4" height="8.6"/><rect x="347.61" y="9.4" width="2.4" height="8.6"/><rect x="355.86" y="9.4" width="2.4" height="8.6"/><rect x="364.12" y="9.4" width="2.4" height="8.6"/><rect x="372.38" y="9.4" width="2.4" height="8.6"/><rect x="380.63" y="9.4" width="2.4" height="8.6"/><rect x="388.88" y="9.4" width="2.4" height="8.6"/><rect x="397.14" y="9.4" width="2.4" height="8.6"/><rect x="405.40" y="0" width="2.4" height="18"/><rect x="413.65" y="9.4" width="2.4" height="8.6"/><rect x="421.91" y="9.4" width="2.4" height="8.6"/><rect x="430.16" y="9.4" width="2.4" height="8.6"/><rect x="438.42" y="9.4" width="2.4" height="8.6"/><rect x="446.67" y="9.4" width="2.4" height="8.6"/><rect x="454.93" y="9.4" width="2.4" height="8.6"/><rect x="463.18" y="9.4" width="2.4" height="8.6"/><rect x="471.44" y="9.4" width="2.4" height="8.6"/><rect x="479.69" y="9.4" width="2.4" height="8.6"/><rect x="487.95" y="0" width="2.4" height="18"/><rect x="496.20" y="9.4" width="2.4" height="8.6"/><rect x="504.46" y="9.4" width="2.4" height="8.6"/><rect x="512.71" y="9.4" width="2.4" height="8.6"/><rect x="520.97" y="9.4" width="2.4" height="8.6"/><rect x="529.22" y="9.4" width="2.4" height="8.6"/><rect x="537.48" y="9.4" width="2.4" height="8.6"/><rect x="545.73" y="9.4" width="2.4" height="8.6"/><rect x="553.99" y="9.4" width="2.4" height="8.6"/><rect x="562.24" y="9.4" width="2.4" height="8.6"/><rect x="570.50" y="0" width="2.4" height="18"/><rect x="578.75" y="9.4" width="2.4" height="8.6"/><rect x="587.00" y="9.4" width="2.4" height="8.6"/><rect x="595.26" y="9.4" width="2.4" height="8.6"/><rect x="603.51" y="9.4" width="2.4" height="8.6"/><rect x="611.77" y="9.4" width="2.4" height="8.6"/><rect x="620.03" y="9.4" width="2.4" height="8.6"/><rect x="628.28" y="9.4" width="2.4" height="8.6"/><rect x="636.53" y="9.4" width="2.4" height="8.6"/><rect x="644.79" y="9.4" width="2.4" height="8.6"/><rect x="653.05" y="0" width="2.4" height="18"/><rect x="661.30" y="9.4" width="2.4" height="8.6"/><rect x="669.55" y="9.4" width="2.4" height="8.6"/><rect x="677.81" y="9.4" width="2.4" height="8.6"/><rect x="686.07" y="9.4" width="2.4" height="8.6"/><rect x="694.32" y="9.4" width="2.4" height="8.6"/><rect x="702.57" y="9.4" width="2.4" height="8.6"/><rect x="710.83" y="9.4" width="2.4" height="8.6"/><rect x="719.09" y="9.4" width="2.4" height="8.6"/><rect x="727.34" y="9.4" width="2.4" height="8.6"/><rect x="735.59" y="0" width="2.4" height="18"/><rect x="743.85" y="9.4" width="2.4" height="8.6"/><rect x="752.11" y="9.4" width="2.4" height="8.6"/><rect x="760.36" y="9.4" width="2.4" height="8.6"/><rect x="768.61" y="9.4" width="2.4" height="8.6"/><rect x="776.87" y="9.4" width="2.4" height="8.6"/><rect x="785.13" y="9.4" width="2.4" height="8.6"/><rect x="793.38" y="9.4" width="2.4" height="8.6"/><rect x="801.64" y="9.4" width="2.4" height="8.6"/><rect x="809.89" y="9.4" width="2.4" height="8.6"/><rect x="818.15" y="0" width="2.4" height="18"/></svg>
<div style="left:1454.2px;top:1509.3px;width:826.2450000000001px;height:5px;background:#40634a;"></div>
<div style="left:1454.2px;top:1514.3px;width:826.2450000000001px;height:1.2px;background:#54393f;"></div>
<div style="left:1456.2px;top:1503px;width:11px;height:4.2px;background:#3b7cf2;border-radius:1px"></div>
<div style="left:1657.575px;top:1503px;width:11px;height:4.2px;background:#3b7cf2;border-radius:1px"></div>
<div style="left:1863.95px;top:1503px;width:11px;height:4.2px;background:#3b7cf2;border-radius:1px"></div>
<div style="left:2053.815px;top:1503px;width:11px;height:4.2px;background:#3b7cf2;border-radius:1px"></div>
<div style="left:2268.445px;top:1503px;width:11px;height:4.2px;background:#3b7cf2;border-radius:1px"></div>
<span class="t " style="left:1459.30px;top:1516.45px;font-size:22.5px;color:#d9d9d9;">1</span>
<span class="t " style="left:1517.50px;top:1516.45px;font-size:22.5px;color:#d9d9d9;letter-spacing:-0.60px;">10</span>
<span class="t " style="left:1598.50px;top:1516.45px;font-size:22.5px;color:#d9d9d9;letter-spacing:1.30px;">20</span>
<span class="t " style="left:1682.00px;top:1516.45px;font-size:22.5px;color:#d9d9d9;letter-spacing:0.80px;">30</span>
<span class="t " style="left:1765.00px;top:1516.45px;font-size:22.5px;color:#d9d9d9;letter-spacing:1.00px;">40</span>
<span class="t " style="left:1847.00px;top:1516.45px;font-size:22.5px;color:#d9d9d9;letter-spacing:1.90px;">50</span>
<span class="t " style="left:1930.00px;top:1516.45px;font-size:22.5px;color:#d9d9d9;letter-spacing:0.60px;">60</span>
<span class="t " style="left:2011.30px;top:1516.45px;font-size:22.5px;color:#d9d9d9;letter-spacing:0.70px;">70</span>
<span class="t " style="left:2093.30px;top:1516.45px;font-size:22.5px;color:#d9d9d9;letter-spacing:1.30px;">80</span>
<span class="t " style="left:2176.20px;top:1516.45px;font-size:22.5px;color:#d9d9d9;letter-spacing:1.30px;">90</span>
<span class="t " style="left:2240.30px;top:1516.45px;font-size:22.5px;color:#d9d9d9;letter-spacing:0.25px;">100</span>
<div style="left:2279.445px;top:1460px;width:3px;height:77px;background:#0b0b0c;"></div>
<span class="t " style="left:2239.45px;top:1457.65px;font-size:22.5px;color:#3b7cf2;letter-spacing:0.25px;">100</span>
<svg style="left:2257.445px;top:1479px" width="32" height="14.8"><polygon points="0,0 32,0 16.0,14.8" fill="#3b7cf2"/></svg>
<div style="left:2272.445px;top:1494px;width:2px;height:22px;background:repeating-linear-gradient(180deg,#e8e8e8 0,#e8e8e8 2px,transparent 2px,transparent 4px);"></div>
<svg style="left:2428px;top:1510px" width="22" height="30" viewBox="0 0 22 30"><path d="M1.5 3 L10.5 14 L19.5 3 M1.5 14 L10.5 25 L19.5 14" stroke="#9e9ea0" stroke-width="2.6" fill="none"/></svg>
<span class="t " style="left:135.60px;top:1557.87px;font-size:28.5px;color:#cbcbcb;letter-spacing:0.67px;text-shadow:0 1.5px 1px rgba(20,20,20,.85);">Global</span>
<svg style="left:256.2px;top:1568px" width="13.3" height="7"><polygon points="0,0 13.3,0 6.65,7" fill="#c4c4c6"/></svg>
<div style="left:286.6px;top:1551px;width:2.2px;height:44px;background:#29282b;"></div>
<div class="btn" style="left:340.7px;top:1546.3px;width:41.5px;height:55.7px"></div><svg style="left:340.7px;top:1546.3px;filter:drop-shadow(0 1.5px 0.5px rgba(20,20,22,.8))" width="41.5" height="55.7" viewBox="-20.8 -26.3 41.5 55.7"><rect x="-1.7" y="-10.5" width="3.4" height="21" fill="#bdbdbf"/></svg>
<div class="btn" style="left:384px;top:1546.3px;width:75.8px;height:55.7px"></div><svg style="left:384px;top:1546.3px;filter:drop-shadow(0 1.5px 0.5px rgba(20,20,22,.8))" width="75.8" height="55.7" viewBox="-37.9 -26.3 75.8 55.7"><polygon points="-13,0 7,-11.5 7,11.5" fill="#bdbdbf"/><rect x="9" y="-10.5" width="3.6" height="21" fill="#a9a9ab"/><rect x="5" y="-10.5" width="2.6" height="21" fill="#8d8d8f"/></svg>
<div class="btn" style="left:462px;top:1546.3px;width:75.8px;height:55.7px"></div><svg style="left:462px;top:1546.3px;filter:drop-shadow(0 1.5px 0.5px rgba(20,20,22,.8))" width="75.8" height="55.7" viewBox="-37.9 -26.3 75.8 55.7"><polygon points="-11,0 11,-12 11,12" fill="#bdbdbf"/></svg>
<div class="fld" style="left:542.4px;top:1549.4px;width:114.5px;height:51px;border-radius:4px"></div>
<span class="t " style="left:573.30px;top:1559.87px;font-size:28.5px;color:#f0a12e;letter-spacing:0.75px;">100</span>
<div class="btn" style="left:661.5px;top:1546.3px;width:75.6px;height:55.7px"></div><svg style="left:661.5px;top:1546.3px;filter:drop-shadow(0 1.5px 0.5px rgba(20,20,22,.8))" width="75.6" height="55.7" viewBox="-37.8 -26.3 75.6 55.7"><polygon points="12,0 -10,-12 -10,12" fill="#bdbdbf"/></svg>
<div class="btn" style="left:740.8px;top:1546.3px;width:74.3px;height:55.7px"></div><svg style="left:740.8px;top:1546.3px;filter:drop-shadow(0 1.5px 0.5px rgba(20,20,22,.8))" width="74.3" height="55.7" viewBox="-37.2 -26.3 74.3 55.7"><polygon points="13,0 -7,-11.5 -7,11.5" fill="#bdbdbf"/><rect x="-12.6" y="-10.5" width="3.6" height="21" fill="#a9a9ab"/><rect x="-7.6" y="-10.5" width="2.6" height="21" fill="#8d8d8f"/></svg>
<div class="btn" style="left:818.2px;top:1546.3px;width:42.1px;height:55.7px"></div><svg style="left:818.2px;top:1546.3px;filter:drop-shadow(0 1.5px 0.5px rgba(20,20,22,.8))" width="42.1" height="55.7" viewBox="-21.0 -26.3 42.1 55.7"><ellipse rx="7.2" ry="8.6" fill="none" stroke="#bdbdbf" stroke-width="2.8"/></svg>
<div class="btn" style="left:891.8px;top:1548.8px;width:50.4px;height:51.7px"></div><svg style="left:891.8px;top:1548.8px;filter:drop-shadow(0 1.5px 0.5px rgba(20,20,22,.8))" width="50.4" height="51.7" viewBox="-25.2 -24.3 50.4 51.7"><polygon points="-12,0 0,-7 0,7" fill="#bdbdbf"/><polygon points="0,0 12,-7 12,7" fill="#bdbdbf"/></svg>
<div style="left:947.5px;top:1552px;width:51.0px;height:45.5px;box-sizing:border-box;border:2px solid #2a292c;border-radius:5px;background:#353841"></div>
<span class="t " style="left:954.00px;top:1559.87px;font-size:28.5px;color:#d4d4d6;letter-spacing:-1.75px;">10</span>
<div class="btn" style="left:1003.8px;top:1548.8px;width:51.1px;height:51.7px"></div><svg style="left:1003.8px;top:1548.8px;filter:drop-shadow(0 1.5px 0.5px rgba(20,20,22,.8))" width="51.1" height="51.7" viewBox="-25.6 -24.3 51.1 51.7"><polygon points="12,0 0,-7 0,7" fill="#bdbdbf"/><polygon points="0,0 -12,-7 -12,7" fill="#bdbdbf"/></svg>
<svg style="left:1161px;top:1554.5px" width="30" height="35" viewBox="0 0 30 35"><path d="M7 16 V10 Q7 2.5 15 2.5 Q23 2.5 23 10 V16" stroke="#b5b5b7" stroke-width="4.4" fill="none"/><rect x="0.5" y="14" width="29" height="20.5" rx="1.5" fill="#b5b5b7"/><circle cx="15" cy="22" r="2.6" fill="#444346"/><rect x="13.8" y="22" width="2.4" height="7" fill="#444346"/></svg>
<svg style="left:1213.6px;top:1554.5px" width="41" height="35" viewBox="0 0 41 35"><polygon points="17.5,0 17.5,21 28.5,10.5" fill="#b5b5b7"/><path d="M1.2 22 V33 H39.5 V22" stroke="#b5b5b7" stroke-width="2.4" fill="none"/><rect x="0" y="30.5" width="40.7" height="4" fill="#b5b5b7"/><path d="M11 26.5V33M20.5 24.5V33M30 26.5V33" stroke="#b5b5b7" stroke-width="2.2"/></svg>
<span class="t " style="left:1344.90px;top:1557.87px;font-size:28.5px;color:#cbcbcb;letter-spacing:0.67px;text-shadow:0 1.5px 1px rgba(20,20,20,.85);">Global</span>
<svg style="left:1465.5px;top:1568px" width="13.3" height="7"><polygon points="0,0 13.3,0 6.65,7" fill="#c4c4c6"/></svg>
<div style="left:1495.8px;top:1551px;width:2.2px;height:44px;background:#29282b;"></div>
<div class="btn" style="left:1522.7px;top:1546.3px;width:40.9px;height:55.7px"></div><svg style="left:1522.7px;top:1546.3px;filter:drop-shadow(0 1.5px 0.5px rgba(20,20,22,.8))" width="40.9" height="55.7" viewBox="-20.4 -26.3 40.9 55.7"><rect x="-1.7" y="-10.5" width="3.4" height="21" fill="#bdbdbf"/></svg>
<div class="btn" style="left:1566px;top:1546.3px;width:75.9px;height:55.7px"></div><svg style="left:1566px;top:1546.3px;filter:drop-shadow(0 1.5px 0.5px rgba(20,20,22,.8))" width="75.9" height="55.7" viewBox="-38.0 -26.3 75.9 55.7"><polygon points="-13,0 7,-11.5 7,11.5" fill="#bdbdbf"/><rect x="9" y="-10.5" width="3.6" height="21" fill="#a9a9ab"/><rect x="5" y="-10.5" width="2.6" height="21" fill="#8d8d8f"/></svg>
<div class="btn" style="left:1644px;top:1546.3px;width:76.0px;height:55.7px"></div><svg style="left:1644px;top:1546.3px;filter:drop-shadow(0 1.5px 0.5px rgba(20,20,22,.8))" width="76.0" height="55.7" viewBox="-38.0 -26.3 76.0 55.7"><polygon points="-11,0 11,-12 11,12" fill="#bdbdbf"/></svg>
<div class="fld" style="left:1725.4px;top:1549.4px;width:114.5px;height:51px;border-radius:4px"></div>
<span class="t " style="left:1757.30px;top:1559.87px;font-size:28.5px;color:#d6d6d8;letter-spacing:0.75px;">100</span>
<div class="btn" style="left:1843.9px;top:1546.3px;width:75.5px;height:55.7px"></div><svg style="left:1843.9px;top:1546.3px;filter:drop-shadow(0 1.5px 0.5px rgba(20,20,22,.8))" width="75.5" height="55.7" viewBox="-37.8 -26.3 75.5 55.7"><rect x="-12" y="-12" width="24" height="24" rx="3" fill="#bdbdbf"/></svg>
<div class="btn" style="left:1922.5px;top:1546.3px;width:74.9px;height:55.7px"></div><svg style="left:1922.5px;top:1546.3px;filter:drop-shadow(0 1.5px 0.5px rgba(20,20,22,.8))" width="74.9" height="55.7" viewBox="-37.5 -26.3 74.9 55.7"><polygon points="13,0 -7,-11.5 -7,11.5" fill="#bdbdbf"/><rect x="-12.6" y="-10.5" width="3.6" height="21" fill="#a9a9ab"/><rect x="-7.6" y="-10.5" width="2.6" height="21" fill="#8d8d8f"/></svg>
<div class="btn" style="left:2000.5px;top:1546.3px;width:41.8px;height:55.7px"></div><svg style="left:2000.5px;top:1546.3px;filter:drop-shadow(0 1.5px 0.5px rgba(20,20,22,.8))" width="41.8" height="55.7" viewBox="-20.9 -26.3 41.8 55.7"><ellipse rx="7.2" ry="8.6" fill="none" stroke="#bdbdbf" stroke-width="2.8"/></svg>
<div class="btn" style="left:2073.2px;top:1548.8px;width:51.7px;height:51.7px"></div><svg style="left:2073.2px;top:1548.8px;filter:drop-shadow(0 1.5px 0.5px rgba(20,20,22,.8))" width="51.7" height="51.7" viewBox="-25.9 -24.3 51.7 51.7"><polygon points="-12,0 0,-7 0,7" fill="#bdbdbf"/><polygon points="0,0 12,-7 12,7" fill="#bdbdbf"/></svg>
<div style="left:2129.8px;top:1552px;width:51.7px;height:45.5px;box-sizing:border-box;border:2px solid #2a292c;border-radius:5px;background:#353841"></div>
<span class="t " style="left:2136.30px;top:1559.87px;font-size:28.5px;color:#d4d4d6;letter-spacing:-1.75px;">10</span>
<div class="btn" style="left:2186.1px;top:1548.8px;width:51.1px;height:51.7px"></div><svg style="left:2186.1px;top:1548.8px;filter:drop-shadow(0 1.5px 0.5px rgba(20,20,22,.8))" width="51.1" height="51.7" viewBox="-25.5 -24.3 51.1 51.7"><polygon points="12,0 0,-7 0,7" fill="#bdbdbf"/><polygon points="0,0 -12,-7 -12,7" fill="#bdbdbf"/></svg>
<svg style="left:2310.8px;top:1554.5px" width="30" height="35" viewBox="0 0 30 35"><path d="M7 16 V10 Q7 2.5 15 2.5 Q23 2.5 23 10 V16" stroke="#b5b5b7" stroke-width="4.4" fill="none"/><rect x="0.5" y="14" width="29" height="20.5" rx="1.5" fill="#b5b5b7"/><circle cx="15" cy="22" r="2.6" fill="#444346"/><rect x="13.8" y="22" width="2.4" height="7" fill="#444346"/></svg>
<svg style="left:2364px;top:1554.5px" width="41" height="35" viewBox="0 0 41 35"><polygon points="17.5,0 17.5,21 28.5,10.5" fill="#b5b5b7"/><path d="M1.2 22 V33 H39.5 V22" stroke="#b5b5b7" stroke-width="2.4" fill="none"/><rect x="0" y="30.5" width="40.7" height="4" fill="#b5b5b7"/><path d="M11 26.5V33M20.5 24.5V33M30 26.5V33" stroke="#b5b5b7" stroke-width="2.2"/></svg>
<div style="left:112.5px;top:1624px;width:21px;height:21px;background:#c6c5c7;"></div><div style="left:112.5px;top:1645px;width:21px;height:18px;background:#939294;"></div><div style="left:133.5px;top:1624px;width:18.5px;height:39px;background:#565558;"></div>
<div style="left:431.8px;top:1627.4px;width:281px;height:45px;background:linear-gradient(#3b3a3d,#373639);box-sizing:border-box;border:2px solid #252427;border-radius:0 0 0 9px;"></div>
<div style="left:711px;top:1627.4px;width:266px;height:45px;background:linear-gradient(#3b3a3d,#373639);box-sizing:border-box;border:2px solid #252427;border-radius:0 6px 6px 0;"></div>
<div style="left:161px;top:1619.6px;width:269.4px;height:57px;background:#48474a;border-radius:8px 8px 0 0;border:1.5px solid #2c2b2e;border-bottom:none;"></div>
<span class="t " style="left:190.80px;top:1631.77px;font-size:28.5px;color:#e9972b;letter-spacing:1.05px;text-shadow:0 1.5px 1px rgba(20,20,20,.85);">Node Graph</span>
<svg style="left:381px;top:1635.4px" width="24" height="24" viewBox="-12 -12 24 24"><path d="M-7.5 -7.5L7.5 7.5M-7.5 7.5L7.5 -7.5" stroke="#98979a" stroke-width="4.2" stroke-linecap="butt" fill="none"/></svg>
<span class="t " style="left:464.30px;top:1634.27px;font-size:28.5px;color:#cdcdcd;letter-spacing:1.02px;text-shadow:0 1.5px 1px rgba(20,20,20,.85);">Curve Editor</span>
<div style="left:656.4px;top:1635.9px;width:28px;height:28px;border-radius:14px;background:#2c2b2e"></div>
<svg style="left:658.4px;top:1637.9px" width="24" height="24" viewBox="-12 -12 24 24"><path d="M-6.5 -6.5L6.5 6.5M-6.5 6.5L6.5 -6.5" stroke="#59585b" stroke-width="4" stroke-linecap="butt" fill="none"/></svg>
<span class="t " style="left:742.20px;top:1634.27px;font-size:28.5px;color:#cdcdcd;letter-spacing:1.19px;text-shadow:0 1.5px 1px rgba(20,20,20,.85);">Dope Sheet</span>
<div style="left:924.8px;top:1635.9px;width:28px;height:28px;border-radius:14px;background:#2c2b2e"></div>
<svg style="left:926.8px;top:1637.9px" width="24" height="24" viewBox="-12 -12 24 24"><path d="M-6.5 -6.5L6.5 6.5M-6.5 6.5L6.5 -6.5" stroke="#59585b" stroke-width="4" stroke-linecap="butt" fill="none"/></svg>
<div style="left:1276.3px;top:1703.4px;width:192.2px;height:157px;background:#cfcfcf;box-shadow:0 0 0 1.2px rgba(30,28,32,.55);"></div>
<div style="left:1280.5px;top:1706.6px;width:185px;height:103.6px;background:#000;overflow:hidden"><div style="left:37.5px;top:-2.5px;width:108px;height:108px;border-radius:50%;background:radial-gradient(circle closest-side,rgba(0,0,0,0) 90%,rgba(0,0,0,.5) 96%,#000 100%),radial-gradient(circle closest-side,#fff 0,#fff 5%,rgba(255,255,255,.62) 38%,rgba(255,255,255,.24) 78%,rgba(255,255,255,.12) 100%),conic-gradient(from 90deg,#f22,#ff2,#2f2,#2ff,#22f,#f2f,#f22);"></div></div>
<div style="left:1280.5px;top:1810.2px;width:185px;height:1.5px;background:#cfcfcf;"></div>
<span class="t " style="left:1299.20px;top:1819.61px;font-size:23.5px;color:#26252a;letter-spacing:1.01px;">ColorWheel1</span>
<div style="left:1282.3px;top:1849.8px;width:16.2px;height:7.2px;background:#e62a1c;"></div><div style="left:1298.5px;top:1849.8px;width:16.6px;height:7.2px;background:#3cdc2a;"></div><div style="left:1315.1px;top:1849.8px;width:21px;height:7.2px;background:#2647ea;"></div><div style="left:1336.1px;top:1849.8px;width:20px;height:7.2px;background:#ffffff;"></div>
<svg style="left:1362.65px;top:1862.3px" width="19.7" height="12.7"><polygon points="0,0 19.7,0 9.85,12.7" fill="#000"/></svg>
<div style="left:1276.3px;top:1878.5px;width:192.2px;height:45.5px;background:#a67fb2;box-shadow:0 0 0 1.2px rgba(30,28,32,.55);"></div><span class="t " style="left:1307.40px;top:1887.91px;font-size:23.5px;color:#2a1233;letter-spacing:1.56px;">Transform1</span><div style="left:1282.3px;top:1913.5px;width:16.2px;height:7.2px;background:#e62a1c;"></div><div style="left:1298.5px;top:1913.5px;width:16.6px;height:7.2px;background:#3cdc2a;"></div><div style="left:1315.1px;top:1913.5px;width:21px;height:7.2px;background:#2647ea;"></div><div style="left:1336.1px;top:1913.5px;width:20px;height:7.2px;background:#ffffff;"></div>
<svg style="left:1362.65px;top:1925.7px" width="19.7" height="12.7"><polygon points="0,0 19.7,0 9.85,12.7" fill="#000"/></svg>
<div style="left:1276.3px;top:1941.4px;width:192.2px;height:45.8px;background:#a67fb2;box-shadow:0 0 0 1.2px rgba(30,28,32,.55);"></div><span class="t " style="left:1338.30px;top:1951.11px;font-size:23.5px;color:#2a1233;letter-spacing:1.75px;">Crop1</span><div style="left:1282.3px;top:1976.4px;width:16.2px;height:7.2px;background:#e62a1c;"></div><div style="left:1298.5px;top:1976.4px;width:16.6px;height:7.2px;background:#3cdc2a;"></div><div style="left:1315.1px;top:1976.4px;width:21px;height:7.2px;background:#2647ea;"></div><div style="left:1336.1px;top:1976.4px;width:20px;height:7.2px;background:#ffffff;"></div>
<div style="left:1370.5px;top:1987.2px;width:4.6px;height:126px;background:#000;"></div>
<svg style="left:1363.0px;top:2110.8px" width="19.8" height="27"><polygon points="0,0 19.8,0 9.9,27" fill="#000"/></svg>
<div style="left:1276.4px;top:2142px;width:192px;height:45.2px;background:#cfcfcf;box-shadow:0 0 0 1.2px rgba(30,28,32,.55);"></div><span class="t " style="left:1291.80px;top:2150.81px;font-size:23.5px;color:#26252a;letter-spacing:1.85px;">ColorCarpet2</span><div style="left:1282.4px;top:2176px;width:16.2px;height:7.2px;background:#e62a1c;"></div><div style="left:1298.6000000000001px;top:2176px;width:16.6px;height:7.2px;background:#3cdc2a;"></div><div style="left:1315.2px;top:2176px;width:21px;height:7.2px;background:#2647ea;"></div><div style="left:1336.2px;top:2176px;width:20px;height:7.2px;background:#ffffff;"></div>
<svg style="left:1459.7px;top:2129.8px" width="20" height="20" viewBox="-10 -10 20 20"><circle r="9.3" fill="#c5524c"/><polygon points="0,-5.5 5,4 -5,4" fill="#f4e4e4"/></svg>
<svg style="left:872.9px;top:1942.2px;overflow:visible" width="200.9" height="45.1"><polygon points="0,22.55 8,0 192.9,0 200.9,22.55 192.9,45.1 8,45.1" fill="#cfcfcf" stroke="rgba(30,28,32,.55)" stroke-width="1.2"/></svg><span class="t " style="left:925.00px;top:1950.91px;font-size:23.5px;color:#26252a;letter-spacing:1.67px;">Viewer1</span>
<svg style="left:865.5px;top:1957px" width="9" height="15"><polygon points="0,0 9,7.5 0,15" fill="#000"/></svg>
<div style="left:1113px;top:1961px;width:161.7px;height:5.2px;background:repeating-linear-gradient(270deg,#000 0,#000 2.7px,transparent 2.7px,transparent 9.4px);"></div>
<svg style="left:1075.5px;top:1956px" width="25" height="17"><polygon points="25,0 25,17 0,8.5" fill="#000"/></svg>
<span class="t " style="left:1102.50px;top:1956.99px;font-size:26px;color:#36d220;">1</span>
<div style="left:1473px;top:2161.3px;width:147px;height:5.2px;background:repeating-linear-gradient(90deg,#000 0,#000 2.7px,transparent 2.7px,transparent 9.4px);"></div>
<span class="t " style="left:1624.00px;top:2155.99px;font-size:26px;color:#36d220;">1</span>
<svg style="left:1636.5px;top:2155px" width="26" height="18"><polygon points="0,0 0,18 25.5,9" fill="#000"/></svg>
<svg style="left:1661.8px;top:2142.5px;overflow:visible" width="201.9" height="44.5"><polygon points="0,22.25 8,0 193.9,0 201.9,22.25 193.9,44.5 8,44.5" fill="#cfcfcf" stroke="rgba(30,28,32,.55)" stroke-width="1.2"/></svg><span class="t " style="left:1714.50px;top:2151.61px;font-size:23.5px;color:#26252a;letter-spacing:1.83px;">Viewer2</span>
<svg style="left:1655px;top:2157px" width="9" height="15"><polygon points="0,0 9,7.5 0,15" fill="#000"/></svg>
<svg style="left:1741.5px;top:1920.4px" width="40" height="56" viewBox="0 0 40 56"><path d="M4.5 4.5 V43.5 L13 35.8 L18.8 48.2 L25.6 45.2 L20 33 H31.2 Z" fill="#0a0a0a" stroke="#ededed" stroke-width="2.3" stroke-linejoin="miter"/></svg>
<svg style="left:0;top:0" width="2472" height="2280"><defs><mask id="pm" maskUnits="userSpaceOnUse" x="0" y="0" width="2472" height="2280"><circle cx="1236" cy="1140" r="240" fill="#fff"/><polygon points="1183,1035.6 1183,1243.5 1355.6,1139.5" fill="#000" stroke="#000" stroke-width="24" stroke-linejoin="round"/></mask></defs><rect x="990" y="890" width="500" height="500" fill="rgba(255,255,255,.6)" mask="url(#pm)"/></svg>
</div></body></html>
